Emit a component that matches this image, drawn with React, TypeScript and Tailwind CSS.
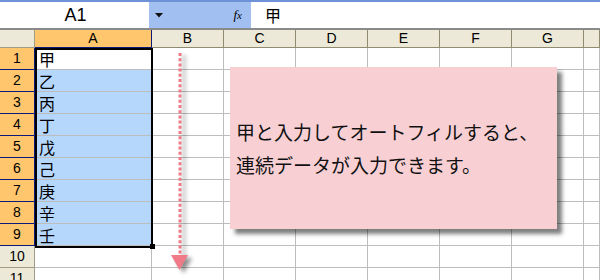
import React from "react";

const cols = ["A", "B", "C", "D", "E", "F", "G", ""];
const values = ["甲", "乙", "丙", "丁", "戊", "己", "庚", "辛", "壬", "", ""];

const latin = { fontFamily: '"Liberation Sans", Arial, sans-serif' };
const jp = { fontFamily: '"Noto Sans CJK JP", "Noto Sans", sans-serif' };

export default function App() {
  return (
    <div className="w-[600px] h-[280px] overflow-hidden bg-white relative">
      {/* formula bar */}
      <div className="h-[28px] flex border-t-2 border-[#6d92d8] bg-white">
        <div className="w-[149px] flex items-center justify-center text-[18px] text-black pl-[2px]" style={latin}>
          A1
        </div>
        <div className="w-[102px] bg-[#a2bff2] flex items-center justify-between pl-[6px] pr-[9px]">
          <svg width="8" height="5" viewBox="0 0 8 5">
            <polygon points="0,0 8,0 4,4.5" fill="#111" />
          </svg>
          <span className="text-[13px] italic text-black" style={{ fontFamily: '"Liberation Serif", serif' }}>
            f<span className="text-[11px]">x</span>
          </span>
        </div>
        <div className="flex-1 flex items-center pl-[14px] text-[16px] text-black" style={jp}>
          甲
        </div>
      </div>
      <div className="h-[2px] bg-[#8a8a8a]" />

      {/* grid */}
      <div
        className="grid"
        style={{ gridTemplateColumns: "35px 117px 72px 72px 72px 72px 72px 72px 16px" }}
      >
        <div className="h-[18px] bg-[#ece9d8] border-r border-b border-[#a09c86]" />
        {cols.map((c, i) => (
          <div
            key={c + i}
            className={
              i === 0
                ? "h-[18px] bg-[#ffc66e] border-r border-b border-[#0a1b7a] flex items-center justify-center text-[14px] text-black"
                : "h-[18px] bg-[#ece9d8] border-r border-b border-[#8f8c72] flex items-center justify-center text-[14px] text-black"
            }
            style={latin}
          >
            {c}
          </div>
        ))}
        {values.map((v, r) => {
          const sel = r < 9;
          return (
            <React.Fragment key={r}>
              <div
                className={
                  sel
                    ? "h-[22px] bg-[#ffc66e] border-r border-b border-[#0a1b7a] flex items-center justify-center text-[14px] text-black"
                    : "h-[22px] bg-[#ece9d8] border-r border-b border-[#a09c86] flex items-center justify-center text-[14px] text-black"
                }
                style={latin}
              >
                {r + 1}
              </div>
              <div
                className={
                  sel && r > 0
                    ? "h-[22px] bg-[#b6d7fc] border-r border-b border-[#bdbdbd] flex items-center pl-[4px] text-[16px] text-black"
                    : "h-[22px] bg-white border-r border-b border-[#bdbdbd] flex items-center pl-[4px] text-[16px] text-black"
                }
                style={jp}
              >
                {v}
              </div>
              {cols.slice(1).map((c, i) => (
                <div key={i} className="h-[22px] bg-white border-r border-b border-[#bdbdbd]" />
              ))}
            </React.Fragment>
          );
        })}
      </div>

      {/* selection border */}
      <div className="absolute left-[35px] top-[48px] w-[118px] h-[200px] border-[2px] border-black pointer-events-none" />
      <div className="absolute left-[150px] top-[244px] w-[5px] h-[5px] bg-black" />

      {/* arrow */}
      <svg
        className="absolute left-[165px] top-[48px]"
        width="36"
        height="232"
        viewBox="0 0 36 232"
        style={{ filter: "drop-shadow(4px 3px 2px rgba(0,0,0,0.45))" }}
      >
        <line x1="15" y1="5" x2="15" y2="208" stroke="#f07a88" strokeWidth="3" strokeDasharray="3 2.2" />
        <polygon points="6,207 23,207 14.5,222" fill="#f07a88" />
      </svg>

      {/* callout */}
      <div
        className="absolute left-[230px] top-[67px] w-[327px] h-[162px] bg-[#f8d0d4] flex flex-col justify-center pl-[6px] text-[19px] text-[#111] leading-[33px]"
        style={{ ...jp, boxShadow: "5px 5px 4px rgba(0,0,0,0.5)" }}
      >
        <div>甲と入力してオートフィルすると、</div>
        <div>連続データが入力できます。</div>
      </div>
    </div>
  );
}
